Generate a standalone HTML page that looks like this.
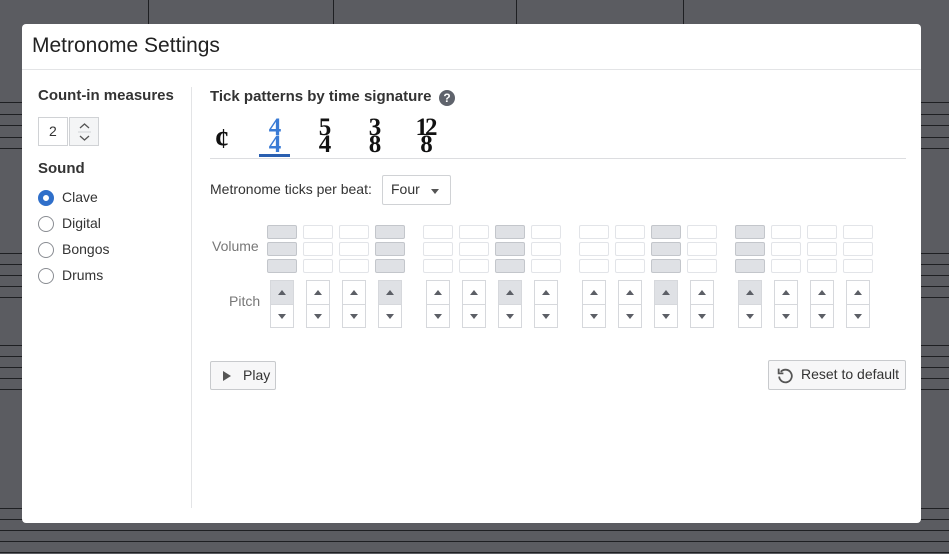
<!DOCTYPE html>
<html><head><meta charset="utf-8"><style>
*{box-sizing:border-box;margin:0;padding:0}
body{width:949px;height:554px;overflow:hidden;background:#5b5c61;font-family:"Segoe UI","Liberation Sans",sans-serif;position:relative;color:#212529}
.sl{position:absolute;left:0;width:949px;height:1px;background:#1e1f22}
.dlg{position:absolute;left:22px;top:24px;width:899px;height:499px;background:#fff;border-radius:4px}
.a{position:absolute}
.v{position:absolute;width:30px;height:14px;border:1px solid #e2e4e8;border-radius:2px;background:#fff}
.v.on{background:#dfe1e5;border-color:#c3c6cb}
.p{position:absolute;width:24px;height:48px;border:1px solid #d6d8dc;top:280px}
.p .u{height:24px;border-bottom:1px solid #d6d8dc;position:relative}
.p.on .u{background:#dfe1e5}
.tri{position:absolute;left:7px;width:0;height:0;border-left:4px solid transparent;border-right:4px solid transparent}
.up{top:9px;border-bottom:5px solid #5c5f66}
.dn{top:33px;border-top:5px solid #5c5f66}
.rad{position:absolute;left:38px;width:16px;height:16px;border:1px solid #8a8d93;border-radius:50%}
.lbl{position:absolute;left:62px;font-size:14px;color:#333}
.ts{position:absolute;font-family:"Liberation Serif",serif;font-weight:bold;font-size:25px;line-height:17px;text-align:center;color:#111}
.btn{position:absolute;border:1px solid #c8cacd;background:#f7f7f8;border-radius:2px;font-size:14px;color:#333}
</style></head><body>
<div class="sl" style="top:102px"></div><div class="sl" style="top:114px"></div><div class="sl" style="top:125px"></div><div class="sl" style="top:137px"></div><div class="sl" style="top:148px"></div>
<div class="sl" style="top:253px"></div><div class="sl" style="top:264px"></div><div class="sl" style="top:275px"></div><div class="sl" style="top:286px"></div><div class="sl" style="top:297px"></div>
<div class="sl" style="top:345px"></div><div class="sl" style="top:356px"></div><div class="sl" style="top:367px"></div><div class="sl" style="top:378px"></div><div class="sl" style="top:389px"></div>
<div class="sl" style="top:508px"></div><div class="sl" style="top:519px"></div><div class="sl" style="top:530px"></div><div class="sl" style="top:541px"></div><div class="sl" style="top:552px"></div>
<div class="a" style="left:148px;top:0;width:1px;height:24px;background:#1e1f22"></div>
<div class="a" style="left:333px;top:0;width:1px;height:24px;background:#1e1f22"></div>
<div class="a" style="left:516px;top:0;width:1px;height:24px;background:#1e1f22"></div>
<div class="a" style="left:683px;top:0;width:1px;height:24px;background:#1e1f22"></div>

<div class="dlg">
<div class="a" style="left:10px;top:10px;font-size:21px;color:#222">Metronome Settings</div>
<div class="a" style="left:0;top:45px;width:899px;height:1px;background:#e3e4e6"></div>
<div class="a" style="left:169px;top:63px;width:1px;height:421px;background:#e3e4e6"></div>

<div class="a" style="left:16px;top:63px;font-size:15px;font-weight:600;color:#333">Count-in measures</div>
<div class="a" style="left:16px;top:93px;width:30px;height:29px;border:1px solid #d0d2d5;font-size:14px;padding:5px 0 0 10px;color:#333">2</div>
<div class="a" style="left:47px;top:93px;width:30px;height:29px;border:1px solid #d0d2d5;background:#f4f5f6">
<svg style="position:absolute;left:8px;top:3px" width="13" height="22" viewBox="0 0 13 22"><path d="M2 7l4.5-4 4.5 4M2 15l4.5 4 4.5-4" fill="none" stroke="#555" stroke-width="1.3"/><path d="M0 11h13" stroke="#d0d2d5"/></svg></div>
<div class="a" style="left:16px;top:136px;font-size:15px;font-weight:600;color:#333">Sound</div>
<div class="rad" style="left:16px;top:166px;border:5px solid #2f6fca"></div><div class="lbl" style="left:40px;top:165px">Clave</div>
<div class="rad" style="left:16px;top:192px"></div><div class="lbl" style="left:40px;top:191px">Digital</div>
<div class="rad" style="left:16px;top:218px"></div><div class="lbl" style="left:40px;top:217px">Bongos</div>
<div class="rad" style="left:16px;top:244px"></div><div class="lbl" style="left:40px;top:243px">Drums</div>

<div class="a" style="left:188px;top:64px;font-size:15px;font-weight:600;color:#333">Tick patterns by time signature</div>
<div class="a" style="left:417px;top:66px;width:16px;height:16px;border-radius:50%;background:#5f636c;color:#fff;font-size:12px;font-weight:bold;text-align:center;line-height:16px">?</div>
<div class="ts" style="left:193px;top:104px;font-size:28px;line-height:24px">¢</div>
<div class="ts" style="left:237px;top:95px;width:32px;color:#3a7bd5">4<br>4</div>
<div class="a" style="left:237px;top:130px;width:31px;height:3px;background:#2a5fb0"></div>
<div class="ts" style="left:287px;top:95px;width:32px">5<br>4</div>
<div class="ts" style="left:337px;top:95px;width:32px">3<br>8</div>
<div class="ts" style="left:385px;top:95px;width:36px;letter-spacing:-3px">12<br>8</div>
<div class="a" style="left:188px;top:134px;width:696px;height:1px;background:#dcdde0"></div>

<div class="a" style="left:188px;top:157px;font-size:14px;color:#333">Metronome ticks per beat:</div>
<div class="a" style="left:360px;top:151px;width:69px;height:30px;border:1px solid #d0d2d5;border-radius:2px;font-size:14px;padding:5px 0 0 8px;color:#333">Four<span style="position:absolute;left:48px;top:13px;border-left:4px solid transparent;border-right:4px solid transparent;border-top:5px solid #555"></span></div>

<div class="a" style="left:190px;top:214px;font-size:14px;color:#777">Volume</div>
<div class="a" style="left:207px;top:269px;font-size:14px;color:#777">Pitch</div>
</div>

<div class="v on" style="left:267px;top:225px"></div><div class="v" style="left:303px;top:225px"></div><div class="v" style="left:339px;top:225px"></div><div class="v on" style="left:375px;top:225px"></div>
<div class="v" style="left:423px;top:225px"></div><div class="v" style="left:459px;top:225px"></div><div class="v on" style="left:495px;top:225px"></div><div class="v" style="left:531px;top:225px"></div>
<div class="v" style="left:579px;top:225px"></div><div class="v" style="left:615px;top:225px"></div><div class="v on" style="left:651px;top:225px"></div><div class="v" style="left:687px;top:225px"></div>
<div class="v on" style="left:735px;top:225px"></div><div class="v" style="left:771px;top:225px"></div><div class="v" style="left:807px;top:225px"></div><div class="v" style="left:843px;top:225px"></div>
<div class="v on" style="left:267px;top:242px"></div><div class="v" style="left:303px;top:242px"></div><div class="v" style="left:339px;top:242px"></div><div class="v on" style="left:375px;top:242px"></div>
<div class="v" style="left:423px;top:242px"></div><div class="v" style="left:459px;top:242px"></div><div class="v on" style="left:495px;top:242px"></div><div class="v" style="left:531px;top:242px"></div>
<div class="v" style="left:579px;top:242px"></div><div class="v" style="left:615px;top:242px"></div><div class="v on" style="left:651px;top:242px"></div><div class="v" style="left:687px;top:242px"></div>
<div class="v on" style="left:735px;top:242px"></div><div class="v" style="left:771px;top:242px"></div><div class="v" style="left:807px;top:242px"></div><div class="v" style="left:843px;top:242px"></div>
<div class="v on" style="left:267px;top:259px"></div><div class="v" style="left:303px;top:259px"></div><div class="v" style="left:339px;top:259px"></div><div class="v on" style="left:375px;top:259px"></div>
<div class="v" style="left:423px;top:259px"></div><div class="v" style="left:459px;top:259px"></div><div class="v on" style="left:495px;top:259px"></div><div class="v" style="left:531px;top:259px"></div>
<div class="v" style="left:579px;top:259px"></div><div class="v" style="left:615px;top:259px"></div><div class="v on" style="left:651px;top:259px"></div><div class="v" style="left:687px;top:259px"></div>
<div class="v on" style="left:735px;top:259px"></div><div class="v" style="left:771px;top:259px"></div><div class="v" style="left:807px;top:259px"></div><div class="v" style="left:843px;top:259px"></div>

<div class="p on" style="left:270px"><div class="u"><i class="tri up"></i></div><i class="tri dn"></i></div>
<div class="p" style="left:306px"><div class="u"><i class="tri up"></i></div><i class="tri dn"></i></div>
<div class="p" style="left:342px"><div class="u"><i class="tri up"></i></div><i class="tri dn"></i></div>
<div class="p on" style="left:378px"><div class="u"><i class="tri up"></i></div><i class="tri dn"></i></div>
<div class="p" style="left:426px"><div class="u"><i class="tri up"></i></div><i class="tri dn"></i></div>
<div class="p" style="left:462px"><div class="u"><i class="tri up"></i></div><i class="tri dn"></i></div>
<div class="p on" style="left:498px"><div class="u"><i class="tri up"></i></div><i class="tri dn"></i></div>
<div class="p" style="left:534px"><div class="u"><i class="tri up"></i></div><i class="tri dn"></i></div>
<div class="p" style="left:582px"><div class="u"><i class="tri up"></i></div><i class="tri dn"></i></div>
<div class="p" style="left:618px"><div class="u"><i class="tri up"></i></div><i class="tri dn"></i></div>
<div class="p on" style="left:654px"><div class="u"><i class="tri up"></i></div><i class="tri dn"></i></div>
<div class="p" style="left:690px"><div class="u"><i class="tri up"></i></div><i class="tri dn"></i></div>
<div class="p on" style="left:738px"><div class="u"><i class="tri up"></i></div><i class="tri dn"></i></div>
<div class="p" style="left:774px"><div class="u"><i class="tri up"></i></div><i class="tri dn"></i></div>
<div class="p" style="left:810px"><div class="u"><i class="tri up"></i></div><i class="tri dn"></i></div>
<div class="p" style="left:846px"><div class="u"><i class="tri up"></i></div><i class="tri dn"></i></div>

<div class="btn" style="left:210px;top:361px;width:66px;height:29px"><span style="position:absolute;left:12px;top:9px;border-top:5px solid transparent;border-bottom:5px solid transparent;border-left:8px solid #555"></span><span style="position:absolute;left:32px;top:5px">Play</span></div>
<div class="btn" style="left:768px;top:360px;width:138px;height:30px">
<svg style="position:absolute;left:7px;top:5px" width="19" height="19" viewBox="0 0 18 18"><path d="M4.5 5.5A6 6 0 1 1 3 10" fill="none" stroke="#555" stroke-width="1.7"/><path d="M2.5 2.5v4.5h4.5" fill="none" stroke="#555" stroke-width="1.7"/></svg>
<span style="position:absolute;left:32px;top:5px">Reset to default</span></div>
</body></html>
